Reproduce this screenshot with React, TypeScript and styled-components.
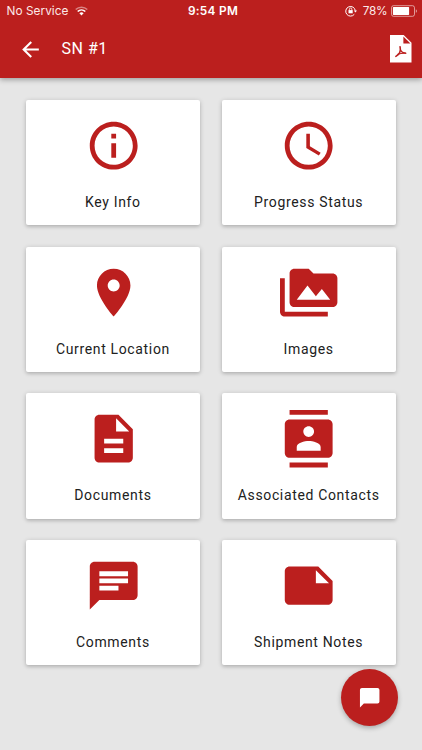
import React from "react";
import styled, { createGlobalStyle } from "styled-components";

const RED = "#bb1f1e";

const GlobalStyle = createGlobalStyle`
  *, *::before, *::after { box-sizing: border-box; }
  body { margin: 0; background: #e6e6e6; font-family: Roboto, sans-serif; }
`;

const Screen = styled.div`
  position: relative;
  width: 422px;
  height: 750px;
  overflow: hidden;
  display: flex;
  flex-direction: column;
  background: #e6e6e6;
`;

const Header = styled.header`
  height: 78px;
  flex: none;
  background: ${RED};
  color: #fff;
  box-shadow: 0 2px 5px rgba(0, 0, 0, 0.3);
  z-index: 1;
`;

const StatusBar = styled.div`
  display: grid;
  grid-template-columns: 1fr auto 1fr;
  align-items: center;
  height: 22px;
  padding: 0 4.5px 0 6.5px;
  font-family: Inter, sans-serif;
  font-size: 11.8px;
  line-height: 22px;
  color: #fbe9e9;
`;

const StatusGroup = styled.div<{ $end?: boolean }>`
  display: flex;
  align-items: center;
  justify-content: ${(p) => (p.$end ? "flex-end" : "flex-start")};
`;

const Carrier = styled.span`
  letter-spacing: 0.05px;
  margin-right: 7px;
`;

const Time = styled.span`
  padding-left: 2px;
  font-weight: 600;
  letter-spacing: 0.3px;
  color: #fff;
`;

const Percent = styled.span`
  margin: 0 3px 0 6px;
  letter-spacing: -0.2px;
`;

const Toolbar = styled.div`
  display: flex;
  align-items: center;
  height: 54px;
  padding: 0 10.5px 0 18px;
`;

const IconButton = styled.button`
  display: flex;
  padding: 0;
  border: 0;
  background: none;
  color: inherit;
`;

const Title = styled.h1`
  flex: 1;
  margin: 0 0 0 18.5px;
  font-size: 16px;
  font-weight: 400;
  line-height: 20px;
  letter-spacing: 0.5px;
`;

const Grid = styled.main`
  display: grid;
  grid-template-columns: repeat(2, 174.3px);
  grid-auto-rows: 125.3px;
  gap: 21.4px;
  padding: 22px 0 0 26.2px;
`;

const Card = styled.article`
  display: flex;
  flex-direction: column;
  align-items: center;
  padding-top: 17px;
  background: #fff;
  border-radius: 2px;
  box-shadow: 0 1px 5px rgba(0, 0, 0, 0.2), 0 2px 3px rgba(0, 0, 0, 0.08);
`;

const CardIcon = styled.svg`
  width: 57.4px;
  height: 57.4px;
  flex: none;
  fill: ${RED};
  overflow: visible;
`;

const Label = styled.span`
  margin-top: 17.6px;
  font-size: 14px;
  line-height: 20px;
  letter-spacing: 0.65px;
  margin-right: 0.8px;
  white-space: nowrap;
  color: #212121;
`;

const ChatButton = styled.button`
  position: absolute;
  right: 24px;
  bottom: 24px;
  width: 57px;
  height: 57px;
  display: flex;
  align-items: center;
  justify-content: center;
  padding: 0;
  border: 0;
  border-radius: 50%;
  background: ${RED};
  box-shadow: 0 2px 5px rgba(0, 0, 0, 0.28);
`;

const tiles = [
  {
    label: "Key Info",
    path: "M11 7h2v2h-2zm0 4h2v6h-2zm1-9C6.48 2 2 6.48 2 12s4.48 10 10 10 10-4.48 10-10S17.52 2 12 2zm0 18c-4.41 0-8-3.59-8-8s3.59-8 8-8 8 3.59 8 8-3.59 8-8 8z",
  },
  {
    label: "Progress Status",
    path: "M11.99 2C6.47 2 2 6.48 2 12s4.47 10 9.99 10C17.52 22 22 17.52 22 12S17.52 2 11.99 2zM12 20c-4.42 0-8-3.58-8-8s3.58-8 8-8 8 3.58 8 8-3.58 8-8 8zM12.5 7H11v6l5.25 3.15.75-1.23-4.5-2.67z",
  },
  {
    label: "Current Location",
    path: "M12 2C8.13 2 5 5.13 5 9c0 5.25 7 13 7 13s7-7.75 7-13c0-3.87-3.13-7-7-7zm0 9.5c-1.38 0-2.5-1.12-2.5-2.5s1.12-2.5 2.5-2.5 2.5 1.12 2.5 2.5-1.12 2.5-2.5 2.5z",
  },
  {
    label: "Images",
    path: "M2 6H0v14c0 1.1.9 2 2 2h18v-2H2V6zm20-2h-8l-2-2H6c-1.1 0-1.99.9-1.99 2L4 16c0 1.1.9 2 2 2h16c1.1 0 2-.9 2-2V6c0-1.1-.9-2-2-2zM7 15l4.5-6 3.5 4.51 2.5-3.01L21 15H7z",
  },
  {
    label: "Documents",
    path: "M14 2H6c-1.1 0-1.99.9-1.99 2L4 20c0 1.1.89 2 1.99 2H18c1.1 0 2-.9 2-2V8l-6-6zm2 16H8v-2h8v2zm0-4H8v-2h8v2zm-3-5V3.5L18.5 9H13z",
  },
  {
    label: "Associated Contacts",
    path: "M20 0H4v2h16V0zM4 24h16v-2H4v2zM20 4H4c-1.1 0-2 .9-2 2v12c0 1.1.9 2 2 2h16c1.1 0 2-.9 2-2V6c0-1.1-.9-2-2-2zm-8 2.75c1.24 0 2.25 1.01 2.25 2.25s-1.01 2.25-2.25 2.25S9.75 10.24 9.75 9 10.76 6.75 12 6.75zM17 17H7v-1.5c0-1.67 3.33-2.5 5-2.5s5 .83 5 2.5V17z",
  },
  {
    label: "Comments",
    path: "M20 2H4c-1.1 0-1.99.9-1.99 2L2 22l4-4h14c1.1 0 2-.9 2-2V4c0-1.1-.9-2-2-2zM6 6h12v2H6V6zm8 8H6v-2h8v2zm4-3H6V9h12v2z",
  },
  {
    label: "Shipment Notes",
    path: "M22 10l-6-6H4c-1.1 0-2 .9-2 2v12.01c0 1.1.9 1.99 2 1.99l16-.01c1.1 0 2-.89 2-1.99v-8zm-7-4.5l5.5 5.5H15V5.5z",
  },
];

const WifiIcon = () => (
  <svg width="13" height="10" viewBox="0 0 13 10" fill="none" stroke="#fff">
    <path d="M.7 3.5a8.3 8.3 0 0 1 11.6 0" strokeWidth="1.5" opacity=".45" />
    <path d="M2.7 5.5a5.5 5.5 0 0 1 7.6 0" strokeWidth="1.7" />
    <path d="M6.5 9.4 4.4 7.3a3 3 0 0 1 4.2 0z" fill="#fff" stroke="none" />
  </svg>
);

const RotationLockIcon = () => (
  <svg width="12" height="12" viewBox="0 0 12 12" fill="none" stroke="#fff">
    <path d="M9.3 9.3A4.8 4.8 0 1 1 10.3 5.6" strokeWidth="1" />
    <path d="M8.8 5.4H12L10.4 7.6z" fill="#fff" stroke="none" />
    <path d="M4.4 5.4V4.2a1.2 1.2 0 0 1 2.4 0v1.2" strokeWidth=".8" />
    <path d="M3.5 5.1h4.2v3.2H3.5z" fill="#fff" stroke="none" />
  </svg>
);

const BatteryIcon = () => (
  <svg width="27" height="12" viewBox="0 0 27 12">
    <rect x=".5" y=".7" width="23" height="10.6" rx="2" fill="none" stroke="#fff" strokeOpacity=".55" />
    <rect x="1.9" y="2.1" width="16.2" height="7.8" rx=".6" fill="#fff" />
    <path d="M24.8 4.2c1.6.5 1.6 3.1 0 3.6z" fill="#fff" opacity=".55" />
  </svg>
);

const BackIcon = () => (
  <svg width="25" height="25" viewBox="0 0 24 24" fill="#fff">
    <path d="M20 11H7.83l5.59-5.59L12 4l-8 8 8 8 1.41-1.41L7.83 13H20v-2z" />
  </svg>
);

const PdfIcon = () => (
  <svg width="21.5" height="27.4" viewBox="0 0 22 28">
    <path d="M0 0h14l8 8v20H0z" fill="#fff" />
    <path d="M13.7 1.5v7.1h7.2z" fill={RED} />
    <g fill="none" stroke={RED} strokeLinecap="round" strokeLinejoin="round">
      <path d="M10.3 12c.6 2.2.5 4.6-.5 6.4-.9 1.6-2.4 2.6-3.8 3.4" strokeWidth="1.6" />
      <path d="M10.6 15.4c1 2 2.9 3 5.5 3.2" strokeWidth="1.4" />
      <path d="M8 19.7c2.4-.8 5-1.2 8-1" strokeWidth="1.1" />
    </g>
  </svg>
);

export default function App() {
  return (
    <>
      <GlobalStyle />
      <Screen>
        <Header>
          <StatusBar>
            <StatusGroup>
              <Carrier>No Service</Carrier>
              <WifiIcon />
            </StatusGroup>
            <Time>9:54 PM</Time>
            <StatusGroup $end>
              <RotationLockIcon />
              <Percent>78%</Percent>
              <BatteryIcon />
            </StatusGroup>
          </StatusBar>
          <Toolbar>
            <IconButton aria-label="Back">
              <BackIcon />
            </IconButton>
            <Title>SN #1</Title>
            <IconButton aria-label="Export PDF">
              <PdfIcon />
            </IconButton>
          </Toolbar>
        </Header>
        <Grid>
          {tiles.map((tile) => (
            <Card key={tile.label}>
              <CardIcon viewBox="0 0 24 24">
                <path d={tile.path} />
              </CardIcon>
              <Label>{tile.label}</Label>
            </Card>
          ))}
        </Grid>
        <ChatButton aria-label="Chat">
          <svg width="23.4" height="23.4" viewBox="0 0 24 24" fill="#fff">
            <path d="M20 2H4c-1.1 0-2 .9-2 2v18l4-4h14c1.1 0 2-.9 2-2V4c0-1.1-.9-2-2-2z" />
          </svg>
        </ChatButton>
      </Screen>
    </>
  );
}
